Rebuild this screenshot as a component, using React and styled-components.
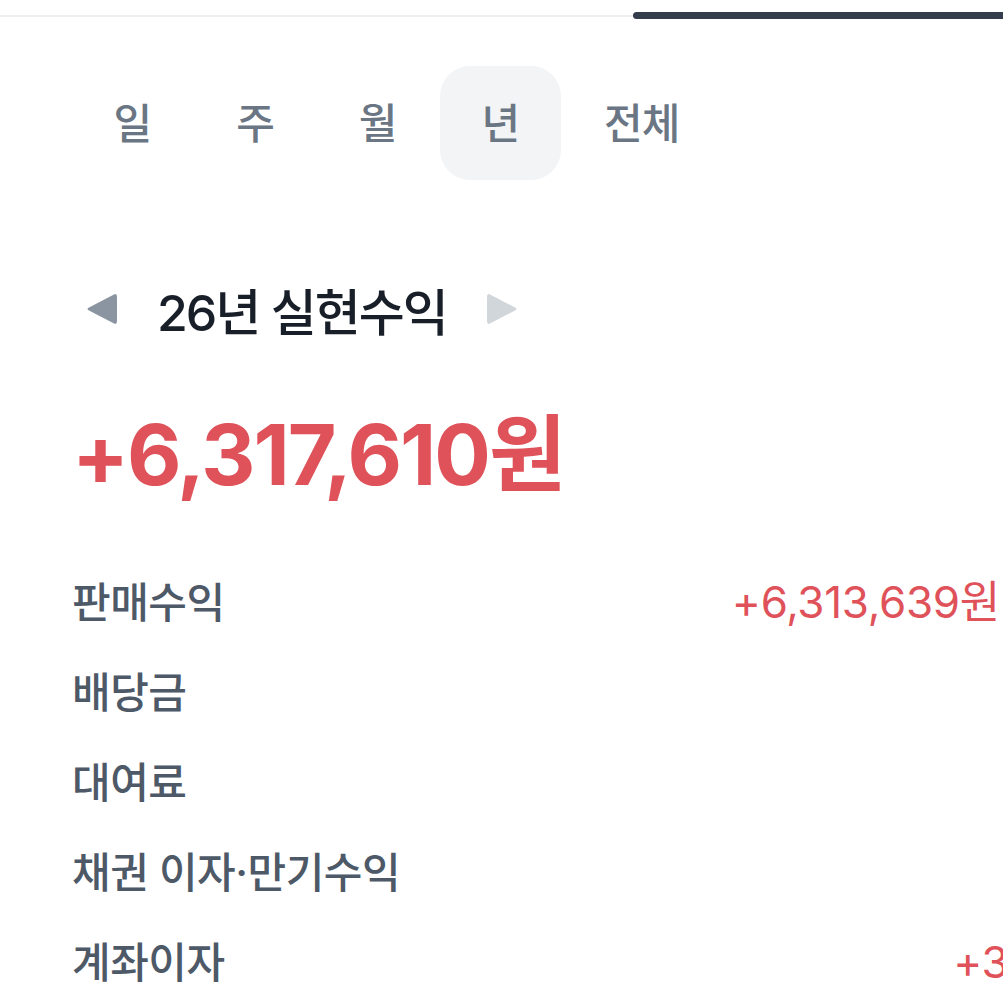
import styled, { createGlobalStyle } from 'styled-components';

const GlobalStyle = createGlobalStyle`
  html, body {
    margin: 0;
    padding: 0;
    background: #ffffff;
  }
  body {
    font-family: Inter, "Noto Sans CJK KR", "Noto Sans", sans-serif;
    -webkit-font-smoothing: antialiased;
  }
`;

const PERIODS = ['일', '주', '월', '년', '전체'];

const ROWS = [
  { label: '판매수익', value: '+6,313,639원' },
  { label: '배당금', value: '' },
  { label: '대여료', value: '' },
  { label: '채권 이자·만기수익', value: '' },
  { label: '계좌이자', value: '+3,971원', bleed: 128 },
];

function Triangle({ dir, color }) {
  const d =
    dir === 'left'
      ? 'M28 2.5 Q31 1 31 5 L31 29 Q31 33 28 31.5 L3 18.5 Q0 17 3 15.5 Z'
      : 'M4 2.5 Q1 1 1 5 L1 29 Q1 33 4 31.5 L29 18.5 Q32 17 29 15.5 Z';
  return (
    <svg width="32" height="34" viewBox="0 0 32 34">
      <path d={d} fill={color} />
    </svg>
  );
}

function App() {
  return (
    <Page>
      <GlobalStyle />
      <TopBar>
        <Track />
        <Thumb />
      </TopBar>

      <Tabs>
        {PERIODS.map((p) => (
          <Tab key={p} $active={p === '년'}>
            {p}
          </Tab>
        ))}
      </Tabs>

      <TitleRow>
        <ArrowButton>
          <Triangle dir="left" color="#8b95a1" />
        </ArrowButton>
        <Title>26년 실현수익</Title>
        <ArrowButton>
          <Triangle dir="right" color="#d1d6db" />
        </ArrowButton>
      </TitleRow>

      <Amount>+6,317,610원</Amount>

      <List>
        {ROWS.map((row) => (
          <Row key={row.label}>
            <Label>{row.label}</Label>
            <Value $bleed={row.bleed}>{row.value}</Value>
          </Row>
        ))}
      </List>
    </Page>
  );
}

const Page = styled.div`
  width: 1003px;
  height: 1003px;
  overflow: hidden;
  background: #ffffff;
`;

const TopBar = styled.div`
  display: flex;
  align-items: center;
  height: 31px;
`;

const Track = styled.div`
  flex: 1;
  height: 2px;
  background: #eeeff1;
`;

const Thumb = styled.div`
  width: 370px;
  height: 7px;
  border-radius: 4px 0 0 4px;
  background: #333d4b;
`;

const Tabs = styled.div`
  display: flex;
  gap: 2px;
  padding: 35px 0 0 72px;
`;

const Tab = styled.div`
  display: flex;
  align-items: center;
  justify-content: center;
  box-sizing: border-box;
  height: 114px;
  padding: 0 41.5px 6px;
  border-radius: 30px;
  font-size: 42px;
  font-weight: 500;
  letter-spacing: -1px;
  color: #6b7684;
  background: ${(p) => (p.$active ? '#f2f4f6' : 'transparent')};
`;

const TitleRow = styled.div`
  display: flex;
  align-items: center;
  gap: 25px;
  padding: 93px 0 0 72px;
`;

const ArrowButton = styled.div`
  display: flex;
  align-items: center;
  justify-content: center;
  width: 60px;
  height: 60px;
`;

const Title = styled.div`
  font-size: 50px;
  font-weight: 500;
  letter-spacing: -2px;
  color: #191f28;
`;

const Amount = styled.div`
  padding: 68px 0 0 72px;
  font-size: 84px;
  font-weight: 700;
  letter-spacing: -2px;
  line-height: 1;
  color: #df525a;
`;

const List = styled.div`
  display: flex;
  flex-direction: column;
  padding: 57px 3px 0 72px;
`;

const Row = styled.div`
  display: flex;
  align-items: center;
  justify-content: space-between;
  height: 90px;
`;

const Label = styled.div`
  font-size: 42px;
  font-weight: 500;
  letter-spacing: -0.5px;
  color: #4e5968;
  white-space: nowrap;
`;

const Value = styled.div`
  font-size: 44px;
  font-weight: 400;
  letter-spacing: -0.3px;
  color: #df525a;
  white-space: nowrap;
  margin-right: ${(p) => (p.$bleed ? `-${p.$bleed}px` : '0')};
`;

export default App;
